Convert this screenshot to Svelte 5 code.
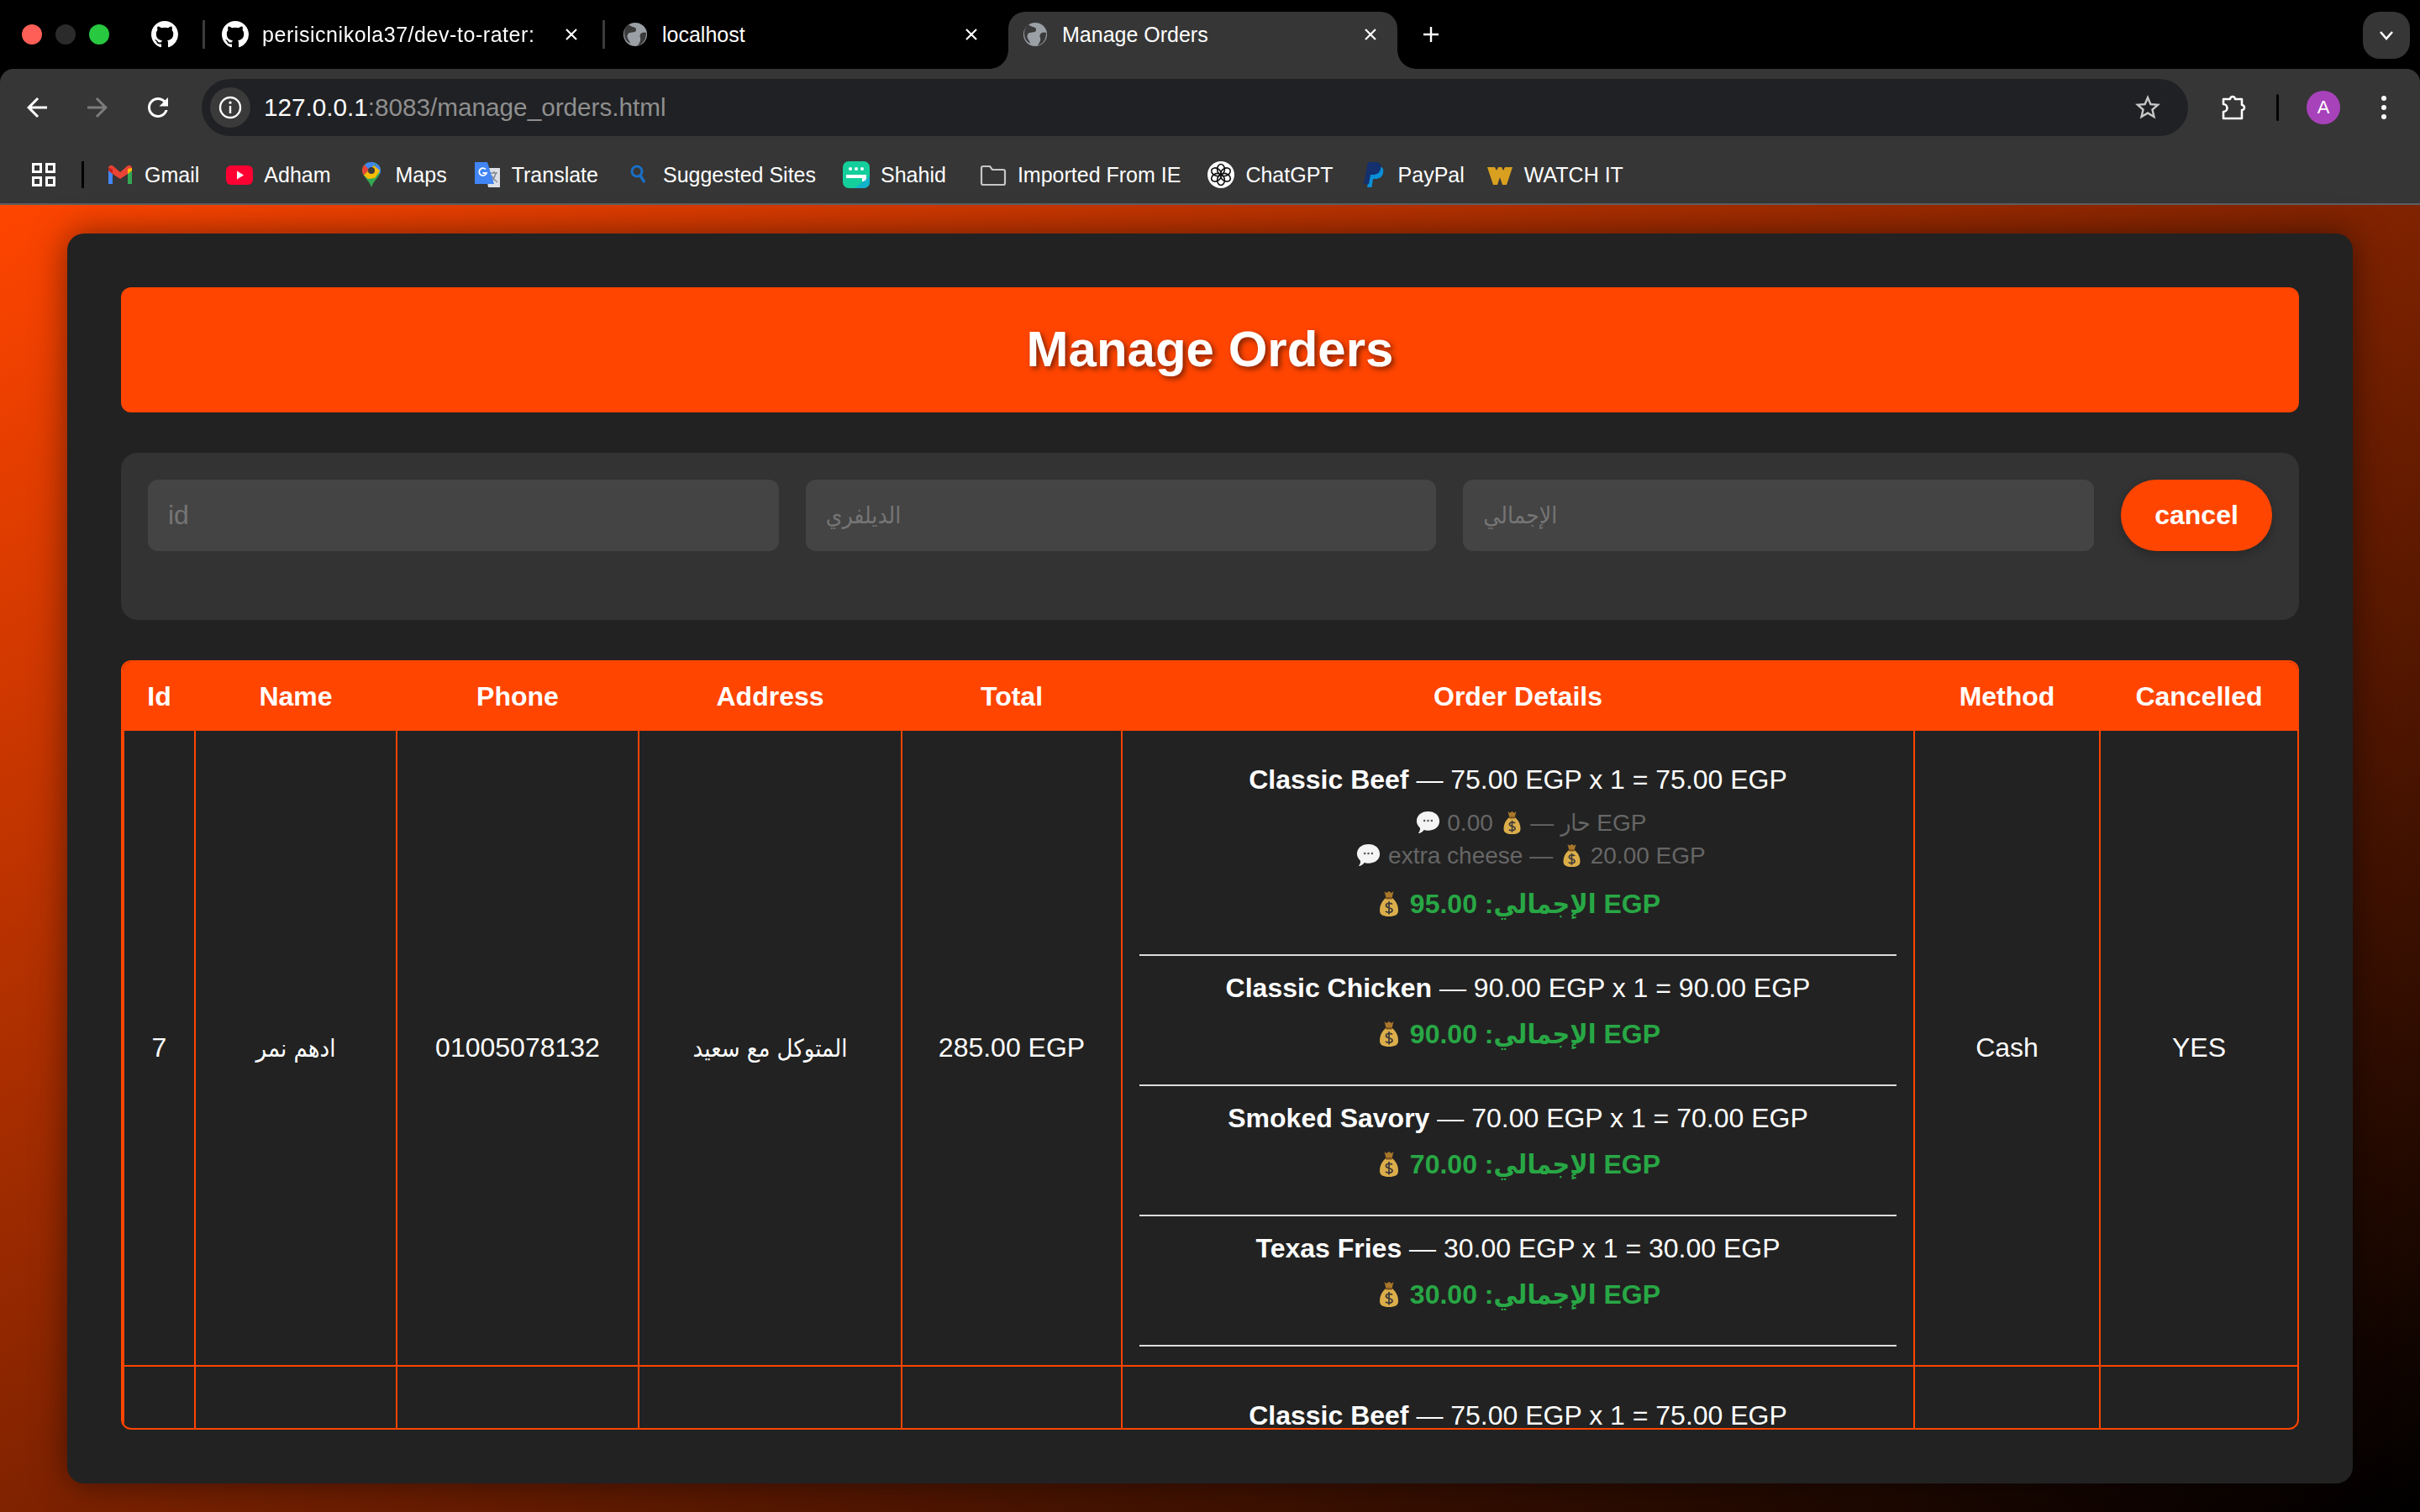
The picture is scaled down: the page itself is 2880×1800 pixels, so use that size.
<script>
  const bookmarks = ['Gmail', 'Adham', 'Maps', 'Translate', 'Suggested Sites', 'Shahid', 'Imported From IE', 'ChatGPT', 'PayPal', 'WATCH IT'];

  const columns = [
    { label: 'Id', width: 85 },
    { label: 'Name', width: 240 },
    { label: 'Phone', width: 288 },
    { label: 'Address', width: 313 },
    { label: 'Total', width: 262 },
    { label: 'Order Details', width: 943 },
    { label: 'Method', width: 221 },
    { label: 'Cancelled', width: 236 },
  ];

  const beef = {
    name: 'Classic Beef',
    line: '75.00 EGP x 1 = 75.00 EGP',
    extras: [
      { label: 'حار', price: '0.00' },
      { label: 'extra cheese', price: '20.00' },
    ],
    total: '95.00',
  };

  const orders = [
    {
      id: 7,
      name: 'ادهم نمر',
      phone: '01005078132',
      address: 'المتوكل مع سعيد',
      total: '285.00 EGP',
      method: 'Cash',
      cancelled: 'YES',
      items: [
        beef,
        { name: 'Classic Chicken', line: '90.00 EGP x 1 = 90.00 EGP', extras: [], total: '90.00' },
        { name: 'Smoked Savory', line: '70.00 EGP x 1 = 70.00 EGP', extras: [], total: '70.00' },
        { name: 'Texas Fries', line: '30.00 EGP x 1 = 30.00 EGP', extras: [], total: '30.00' },
      ],
    },
    {
      id: '',
      name: '',
      phone: '',
      address: '',
      total: '',
      method: '',
      cancelled: '',
      items: [beef],
    },
  ];
</script>

{#snippet bag()}
  <svg class="emoji bag" viewBox="0 0 32 32" aria-hidden="true">
    <path d="M10.5 1 L13 3 L16 1 L19 3 L21.5 1 L19.5 9 H12.5 Z" fill="#a9772a" />
    <path d="M12 9 C6 14 5 20 5 24 C5 29 9 31 16 31 C23 31 27 29 27 24 C27 20 26 14 20 9 Z" fill="#dcae4a" />
    <rect x="12" y="8" width="8" height="2.4" rx="1" fill="#7b5420" />
    <path d="M20 16.5 C18.5 14.8 12.5 14.8 12.5 18 C12.5 21.5 20 20 20 23.5 C20 26.8 13.5 26.8 12 24.8 M16 13 V28.5" fill="none" stroke="#3d3a3a" stroke-width="1.8" />
  </svg>
{/snippet}

{#snippet bubble()}
  <svg class="emoji bubble" viewBox="0 0 32 32" aria-hidden="true">
    <path d="M16 3 C24.5 3 30 8 30 15 C30 22 24.5 26.5 16 26.5 C14 26.5 12.5 26.3 11 25.8 C9.5 28 7 29.8 4 30 C5.5 28 6.5 25.5 6.2 23.4 C3.5 21 2 18.2 2 15 C2 8 7.5 3 16 3 Z" fill="#f4f4f4" />
    <circle cx="11.5" cy="14.5" r="1.3" fill="#555" />
    <circle cx="16" cy="14.5" r="1.3" fill="#555" />
    <circle cx="20.5" cy="14.5" r="1.3" fill="#555" />
  </svg>
{/snippet}

{#snippet globe()}
  <svg class="favicon" viewBox="0 0 28 32" aria-hidden="true">
    <ellipse cx="14" cy="16" rx="14" ry="14" fill="#9aa0a6" />
    <path d="M6 4 C9 8 16 6 15 11 C14 15 7 12 5 16 C3 20 7 22 8 27 C3 24 1 20 1 15 C1 10 3 6 6 4 Z" fill="#3a3a3a" />
    <path d="M27 14 C22 12 18 16 20 20 C21 23 19 26 17 29 C23 28 27 22 27 14 Z" fill="#3a3a3a" />
  </svg>
{/snippet}

{#snippet close()}
  <svg class="tab-close" viewBox="0 0 14 14" aria-hidden="true">
    <path d="M1 1 L13 13 M13 1 L1 13" stroke="#fff" stroke-width="2.2" fill="none" />
  </svg>
{/snippet}

{#snippet octocat()}
  <svg class="octo" viewBox="0 0 16 16" aria-hidden="true">
    <path fill="#fff" d="M8 0C3.58 0 0 3.58 0 8c0 3.54 2.29 6.53 5.47 7.59.4.07.55-.17.55-.38 0-.19-.01-.82-.01-1.49-2.01.37-2.53-.49-2.69-.94-.09-.23-.48-.94-.82-1.13-.28-.15-.68-.52-.01-.53.63-.01 1.08.58 1.23.82.72 1.21 1.87.87 2.33.66.07-.52.28-.87.51-1.07-1.78-.2-3.64-.89-3.64-3.95 0-.87.31-1.59.82-2.15-.08-.2-.36-1.02.08-2.12 0 0 .67-.21 2.2.82.64-.18 1.32-.27 2-.27.68 0 1.36.09 2 .27 1.53-1.04 2.2-.82 2.2-.82.44 1.1.16 1.92.08 2.12.51.56.82 1.27.82 2.15 0 3.07-1.87 3.75-3.65 3.95.29.25.54.73.54 1.48 0 1.07-.01 1.93-.01 2.2 0 .21.15.46.55.38A8.013 8.013 0 0016 8c0-4.42-3.58-8-8-8z" />
  </svg>
{/snippet}

{#snippet markIcon(label)}
  <svg class="mark" viewBox="0 0 32 32" aria-hidden="true">
    {#if label === 'Gmail'}
      <path d="M2 27 V8 L7 9 V27 Z" fill="#4285f4" />
      <path d="M25 27 V9 L30 8 V27 Z" fill="#34a853" />
      <path d="M2 8 C3 4 6 4 8 6 L16 13 L24 6 C26 4 29 4 30 8 L30 11 L25 15 L16 21 L7 15 L2 11 Z" fill="#ea4335" />
      <path d="M25 9 L30 8 V11 L25 15 Z" fill="#fbbc04" />
      <path d="M2 8 L7 9 V15 L2 11 Z" fill="#c5221f" />
    {:else if label === 'Adham'}
      <rect x="0" y="5" width="32" height="23" rx="6" fill="#ff0033" />
      <path d="M13 11.5 L21 16.5 L13 21.5 Z" fill="#fff" />
    {:else if label === 'Maps'}
      <path d="M16 1 C9 1 5 6 5 11 C5 18 13 22 16 31 C19 22 27 18 27 11 C27 6 23 1 16 1 Z" fill="#34a853" />
      <path d="M8 4 C5.8 6 5 8.5 5 11 C5 13 5.8 15 7 16.5 L13 10 Z" fill="#ea4335" />
      <path d="M8 4 C10 2 13 1 16 1 C18 1 20 1.6 21.5 2.5 L13 10 Z" fill="#4285f4" />
      <path d="M21.5 2.5 C24.5 4 27 7 27 11 C27 12.5 26.6 14 26 15 L19 9 Z" fill="#4285f4" />
      <path d="M7 16.5 L19 5 L26 11 C25 14 22 17 20 20 L12 21 Z" fill="#fbbc04" />
      <circle cx="16" cy="11" r="4" fill="#3a3a3a" />
    {:else if label === 'Translate'}
      <path d="M13 8 H31 V31 H17 Z" fill="#dcdfe3" />
      <path d="M20 14 H28 M24 12 V14 M26 14 C25 19 22 23 19 25 M21 17 C23 21 25 23 28 25" stroke="#7d8794" stroke-width="1.4" fill="none" />
      <path d="M1 1 H16 L24 27 H1 Z" fill="#4285f4" />
      <path d="M14 9.5 A4.5 4.5 0 1 0 15 14 H10.5" fill="none" stroke="#fff" stroke-width="1.8" />
    {:else if label === 'Suggested Sites'}
      <circle cx="14" cy="12" r="6" fill="none" stroke="#1a6fc4" stroke-width="3" />
      <path d="M18 17 L23 25" stroke="#1a6fc4" stroke-width="3.4" />
    {:else if label === 'Shahid'}
      <rect x="0" y="0" width="32" height="32" rx="7" fill="#14cf9c" />
      <circle cx="9" cy="9" r="2" fill="#fff" /><circle cx="16" cy="9" r="2" fill="#fff" /><circle cx="23" cy="9" r="2" fill="#fff" />
      <path d="M4 16 H28 V24 H23 V20 H4 Z" fill="#fff" />
      <path d="M14 32 L32 18 V25 A7 7 0 0 1 25 32 Z" fill="#12a8d8" opacity="0.75" />
    {:else if label === 'Imported From IE'}
      <path d="M2 8 A2 2 0 0 1 4 6 H12 L15 10 H28 A2 2 0 0 1 30 12 V26 A2 2 0 0 1 28 28 H4 A2 2 0 0 1 2 26 Z" fill="none" stroke="#c4c7c5" stroke-width="2.2" />
    {:else if label === 'ChatGPT'}
      <circle cx="16" cy="16" r="16" fill="#fff" />
      <g fill="none" stroke="#111" stroke-width="1.6">
        <ellipse cx="16" cy="9.5" rx="4.4" ry="6" />
        <ellipse cx="16" cy="9.5" rx="4.4" ry="6" transform="rotate(60 16 16)" />
        <ellipse cx="16" cy="9.5" rx="4.4" ry="6" transform="rotate(120 16 16)" />
        <ellipse cx="16" cy="9.5" rx="4.4" ry="6" transform="rotate(180 16 16)" />
        <ellipse cx="16" cy="9.5" rx="4.4" ry="6" transform="rotate(240 16 16)" />
        <ellipse cx="16" cy="9.5" rx="4.4" ry="6" transform="rotate(300 16 16)" />
      </g>
    {:else if label === 'PayPal'}
      <path d="M13 6 H21 C27 6 28 10 27 14 C26 19 22 21 18 21 H15 L13.5 31 H8 Z" fill="#0a8fd8" />
      <path d="M9 1 H18 C24 1 25 5 24 9 C23 14 19 16 15 16 H12 L10 27 H4 Z" fill="#14306e" />
    {:else}
      <path d="M1 7 H10 L12 11 L14 7 H18 L20 11 L22 7 H31 L24 28 H19 L16 19 L13 28 H8 Z" fill="#d9a020" />
    {/if}
  </svg>
{/snippet}

<div class="window">
  <div class="tabstrip">
    <div class="lights">
      <span class="light red"></span>
      <span class="light idle"></span>
      <span class="light green"></span>
    </div>
    <div class="pinned">{@render octocat()}</div>
    <span class="tab-sep"></span>
    <div class="tab tab-first">
      {@render octocat()}
      <span class="tab-title faded">perisicnikola37/dev-to-rater: Rate</span>
      {@render close()}
    </div>
    <span class="tab-sep"></span>
    <div class="tab tab-second">
      {@render globe()}
      <span class="tab-title">localhost</span>
      {@render close()}
    </div>
    <div class="tab tab-active">
      {@render globe()}
      <span class="tab-title">Manage Orders</span>
      {@render close()}
    </div>
    <svg class="new-tab" viewBox="0 0 20 20" aria-hidden="true">
      <path d="M10 1 V19 M1 10 H19" stroke="#fff" stroke-width="2.4" />
    </svg>
    <div class="tab-search">
      <svg viewBox="0 0 18 12" aria-hidden="true">
        <path d="M2 2 L9 10 L16 2" fill="none" stroke="#fff" stroke-width="2.6" />
      </svg>
    </div>
  </div>

  <div class="toolbar">
    <div class="nav">
      <svg viewBox="0 0 24 24" aria-hidden="true"><path fill="#fff" d="M20 11H7.83l5.59-5.59L12 4l-8 8 8 8 1.41-1.41L7.83 13H20v-2z" /></svg>
      <svg viewBox="0 0 24 24" aria-hidden="true"><path fill="#7c7c7c" d="M4 11h12.17l-5.59-5.59L12 4l8 8-8 8-1.41-1.41L16.17 13H4v-2z" /></svg>
      <svg viewBox="0 0 24 24" aria-hidden="true"><path fill="#fff" d="M17.65 6.35C16.2 4.9 14.21 4 12 4c-4.42 0-7.99 3.58-7.99 8s3.57 8 7.99 8c3.73 0 6.84-2.55 7.73-6h-2.08c-.82 2.33-3.04 4-5.65 4-3.31 0-6-2.69-6-6s2.69-6 6-6c1.66 0 3.14.69 4.22 1.78L13 11h7V4l-2.35 2.35z" /></svg>
    </div>
    <div class="omnibox">
      <span class="info">
        <svg viewBox="0 0 28 28" aria-hidden="true">
          <circle cx="14" cy="14" r="12" fill="none" stroke="#fff" stroke-width="2.4" />
          <path d="M14 12 V21" stroke="#fff" stroke-width="2.4" />
          <circle cx="14" cy="8.2" r="1.6" fill="#fff" />
        </svg>
      </span>
      <span class="url">127.0.0.1<span class="url-dim">:8083/manage_orders.html</span></span>
      <svg class="star" viewBox="0 0 24 24" aria-hidden="true">
        <path fill="#c7c7c7" d="M22 9.24l-7.19-.62L12 2 9.19 8.63 2 9.24l5.46 4.73L5.82 21 12 17.27 18.18 21l-1.63-7.03L22 9.24zM12 15.4l-3.76 2.27 1-4.28-3.32-2.88 4.38-.38L12 6.1l1.71 4.04 4.38.38-3.32 2.88 1 4.28L12 15.4z" />
      </svg>
    </div>
    <div class="tools">
      <svg class="puzzle" viewBox="0 0 32 32" aria-hidden="true">
        <path d="M5 6 H13 A3 3 0 0 1 19 6 H27 V13 A3 3 0 0 1 27 19 V29 H5 V21 A4.5 4.5 0 0 0 5 12 Z" fill="none" stroke="#fff" stroke-width="2.6" stroke-linejoin="round" />
      </svg>
      <span class="tool-sep"></span>
      <span class="avatar">A</span>
      <svg class="kebab" viewBox="0 0 8 32" aria-hidden="true">
        <circle cx="4" cy="5" r="3" fill="#fff" />
        <circle cx="4" cy="16" r="3" fill="#fff" />
        <circle cx="4" cy="27" r="3" fill="#fff" />
      </svg>
    </div>
  </div>

  <div class="bookmarks">
    <svg class="apps" viewBox="0 0 28 28" aria-hidden="true">
      <g fill="none" stroke="#fff" stroke-width="3">
        <rect x="1.5" y="1.5" width="9" height="9" />
        <rect x="17.5" y="1.5" width="9" height="9" />
        <rect x="1.5" y="17.5" width="9" height="9" />
        <rect x="17.5" y="17.5" width="9" height="9" />
      </g>
    </svg>
    <span class="bar-sep"></span>
    {#each bookmarks as label}
      <div class="bookmark">
        {@render markIcon(label)}
        <span>{label}</span>
      </div>
    {/each}
  </div>

  <main class="page">
    <section class="panel">
      <h1 class="title">Manage Orders</h1>

      <form class="filters">
        <input type="text" placeholder="id" />
        <input class="ar" type="text" placeholder="الديلفري" />
        <input class="ar" type="text" placeholder="الإجمالي" />
        <button type="button" class="cancel">cancel</button>
      </form>

      <div class="table-wrap">
        <table>
          <colgroup>
            {#each columns as col}
              <col style="width: {col.width}px" />
            {/each}
          </colgroup>
          <thead>
            <tr>
              {#each columns as col}
                <th>{col.label}</th>
              {/each}
            </tr>
          </thead>
          <tbody>
            {#each orders as order}
              <tr>
                <td>{order.id}</td>
                <td class="ar">{order.name}</td>
                <td>{order.phone}</td>
                <td class="ar">{order.address}</td>
                <td>{order.total}</td>
                <td class="details">
                  {#each order.items as item}
                    <div class="item">
                      <div class="item-name"><strong>{item.name}</strong> — {item.line}</div>
                      {#if item.extras.length}
                        <div class="extras">
                          {#each item.extras as extra}
                            <div class="extra">{@render bubble()} {extra.label} — {@render bag()} {extra.price} EGP</div>
                          {/each}
                        </div>
                      {/if}
                      <div class="item-total">{@render bag()} الإجمالي: {item.total} EGP</div>
                    </div>
                    <hr />
                  {/each}
                </td>
                <td>{order.method}</td>
                <td>{order.cancelled}</td>
              </tr>
            {/each}
          </tbody>
        </table>
      </div>
    </section>
  </main>
</div>

<style>
  :global(body) {
    margin: 0;
    background: #000;
  }

  .window {
    display: flex;
    flex-direction: column;
    height: 100vh;
    overflow: hidden;
    font-family: 'Liberation Sans', 'DejaVu Sans Condensed', 'DejaVu Sans', sans-serif;
    color: #fff;
  }

  /* browser chrome */
  .tabstrip {
    display: flex;
    align-items: flex-start;
    height: 82px;
    flex: none;
    box-sizing: border-box;
    padding-top: 14px;
    background: #000;
  }

  .lights {
    display: flex;
    gap: 16px;
    margin: 15px 0 0 26px;
    width: 104px;
  }

  .light {
    width: 24px;
    height: 24px;
    border-radius: 50%;
  }
  .red { background: #ff5f57; }
  .idle { background: #2b2b2b; }
  .green { background: #28c840; }

  .pinned {
    display: flex;
    align-items: center;
    height: 54px;
    margin-left: 50px;
    width: 61px;
  }

  .tab-sep {
    width: 3px;
    height: 34px;
    margin-top: 10px;
    background: #3c3c3c;
  }

  .tab {
    display: flex;
    align-items: center;
    box-sizing: border-box;
    height: 54px;
    font-size: 25px;
  }

  .octo {
    width: 32px;
    height: 32px;
    flex: none;
  }

  .favicon {
    width: 28px;
    height: 32px;
    flex: none;
  }

  .tab-first {
    width: 473px;
    padding-left: 20px;
  }

  .tab-second {
    width: 480px;
    padding-left: 22px;
  }

  .tab-active {
    position: relative;
    width: 463px;
    height: 68px;
    padding: 0 0 14px 18px;
    background: #363636;
    border-radius: 20px 20px 0 0;
  }

  .tab-active::before,
  .tab-active::after {
    content: '';
    position: absolute;
    bottom: 0;
    width: 22px;
    height: 22px;
  }

  .tab-active::before {
    left: -22px;
    background: radial-gradient(circle at 0 0, transparent 21.5px, #363636 22px);
  }

  .tab-active::after {
    right: -22px;
    background: radial-gradient(circle at 100% 0, transparent 21.5px, #363636 22px);
  }

  .tab-title {
    margin-left: 18px;
    white-space: nowrap;
    overflow: hidden;
  }

  .tab-first .tab-title { margin-left: 16px; }

  .faded {
    letter-spacing: 0.55px;
    -webkit-mask-image: linear-gradient(to right, #000 97%, transparent 100%);
    mask-image: linear-gradient(to right, #000 97%, transparent 100%);
    max-width: 332px;
  }

  .tab-close {
    width: 14px;
    height: 14px;
    flex: none;
    margin-left: auto;
    margin-right: 25px;
  }

  .tab-first .tab-close { margin-right: 30px; }
  .tab-second .tab-close { margin-right: 37px; }

  .new-tab {
    width: 20px;
    height: 20px;
    margin: 17px 0 0 30px;
    flex: none;
  }

  .tab-search {
    display: flex;
    align-items: center;
    justify-content: center;
    width: 56px;
    height: 56px;
    margin-left: auto;
    margin-right: 12px;
    border-radius: 20px;
    background: #363636;
  }

  .tab-search svg {
    width: 18px;
    height: 12px;
  }

  .toolbar {
    display: flex;
    align-items: center;
    flex: none;
    height: 92px;
    box-sizing: border-box;
    padding-bottom: 12px;
    padding-top: 12px;
    background: #363636;
    border-radius: 16px 16px 0 0;
  }

  .nav {
    display: flex;
    gap: 36px;
    margin-left: 26px;
    width: 214px;
  }

  .nav svg {
    width: 36px;
    height: 36px;
  }

  .omnibox {
    display: flex;
    align-items: center;
    box-sizing: border-box;
    width: 2364px;
    height: 68px;
    padding: 0 30px 0 10px;
    border-radius: 34px;
    background: #202124;
  }

  .info {
    display: flex;
    align-items: center;
    justify-content: center;
    width: 48px;
    height: 48px;
    border-radius: 50%;
    background: #3a3a3a;
  }

  .info svg {
    width: 28px;
    height: 28px;
  }

  .url {
    margin-left: 16px;
    flex: 1;
    font-size: 29.7px;
  }

  .url-dim {
    color: #8f8f8f;
  }

  .star {
    width: 36px;
    height: 36px;
  }

  .tools {
    display: flex;
    align-items: center;
    margin-left: 37px;
  }

  .puzzle {
    width: 32px;
    height: 32px;
  }

  .tool-sep {
    width: 3px;
    height: 32px;
    margin: 0 33px 0 36px;
    background: #000;
    border-radius: 2px;
  }

  .avatar {
    display: flex;
    align-items: center;
    justify-content: center;
    width: 40px;
    height: 40px;
    border-radius: 50%;
    background: #a742ba;
    font-size: 22px;
  }

  .kebab {
    width: 8px;
    height: 32px;
    margin-left: 48px;
  }

  .bookmarks {
    display: flex;
    align-items: center;
    gap: 32px;
    flex: none;
    height: 68px;
    padding-left: 38px;
    background: #363636;
    font-size: 25px;
    border-bottom: 2px solid #5f5f5f;
  }

  .apps {
    width: 28px;
    height: 28px;
    margin-right: -1px;
  }

  .bar-sep {
    width: 3px;
    height: 32px;
    background: #000;
    margin-right: -5px;
  }

  .bookmark {
    display: flex;
    align-items: center;
    gap: 13px;
    white-space: nowrap;
  }

  .bookmark:nth-of-type(7) { margin-left: 8px; }
  .bookmark:nth-of-type(10) { margin-left: -6px; }

  .mark {
    width: 32px;
    height: 32px;
    flex: none;
  }

  /* page */
  .page {
    flex: 1;
    min-height: 0;
    display: flex;
    box-sizing: border-box;
    padding: 34px 80px;
    background: linear-gradient(to bottom right, #ff4500, #000);
  }

  .panel {
    flex: 1;
    min-width: 0;
    display: flex;
    flex-direction: column;
    box-sizing: border-box;
    padding: 64px;
    border-radius: 20px;
    background: #222;
    box-shadow: 0 0 40px rgba(0, 0, 0, 0.5);
  }

  .title {
    flex: none;
    margin: 0 0 48px;
    padding: 0;
    height: 149px;
    line-height: 148px;
    border-radius: 12px;
    background: #ff4500;
    font-size: 60px;
    font-weight: 700;
    text-align: center;
    text-shadow: 3px 3px 6px rgba(0, 0, 0, 0.5);
  }

  .filters {
    display: flex;
    gap: 32px;
    flex: none;
    box-sizing: border-box;
    height: 199px;
    padding: 32px;
    margin: 0 0 48px;
    border-radius: 20px;
    background: #333;
  }

  .filters input {
    flex: 1;
    min-width: 0;
    height: 85px;
    box-sizing: border-box;
    padding: 0 24px;
    border: none;
    border-radius: 12px;
    background: #444;
    color: #fff;
    font-family: inherit;
    font-size: 32px;
    outline: none;
  }

  .filters input.ar {
    font-size: 28px;
  }

  .filters input::placeholder {
    color: #757575;
  }

  .cancel {
    flex: none;
    width: 180px;
    height: 85px;
    border: none;
    border-radius: 42px;
    background: #ff4500;
    color: #fff;
    font-family: inherit;
    font-size: 32px;
    font-weight: 700;
    box-shadow: 0 4px 12px rgba(0, 0, 0, 0.25);
  }

  .table-wrap {
    flex: 1;
    min-height: 0;
    overflow: hidden;
    border: 2px solid #ff4500;
    border-radius: 12px;
  }

  table {
    width: 100%;
    table-layout: fixed;
    border-collapse: collapse;
    font-size: 32px;
  }

  th {
    height: 78px;
    padding: 0;
    background: #ff4500;
    border: 2px solid #ff4500;
    font-weight: 700;
  }

  td {
    padding: 20px;
    border: 2px solid #ff4500;
    text-align: center;
    vertical-align: middle;
  }

  td.ar {
    font-size: 29px;
  }

  td.details {
    padding: 20px 20px 22px;
  }

  .item {
    padding-top: 20px;
  }

  .item-name {
    line-height: 37px;
  }

  .extras {
    margin-top: 13px;
    padding: 0 0 2px 30px;
    font-size: 28px;
    line-height: 39px;
    color: #666;
  }

  .item-total {
    margin-top: 18px;
    line-height: 37px;
    font-weight: 700;
    color: #28a745;
  }

  hr {
    height: 2px;
    margin: 41px 0 0;
    border: none;
    background: #ddd;
  }

  .emoji {
    display: inline-block;
    vertical-align: -5px;
  }

  .bag {
    width: 32px;
    height: 32px;
  }

  .bubble {
    width: 31px;
    height: 31px;
  }

  .extra .bag {
    width: 29px;
    height: 29px;
  }
</style>
